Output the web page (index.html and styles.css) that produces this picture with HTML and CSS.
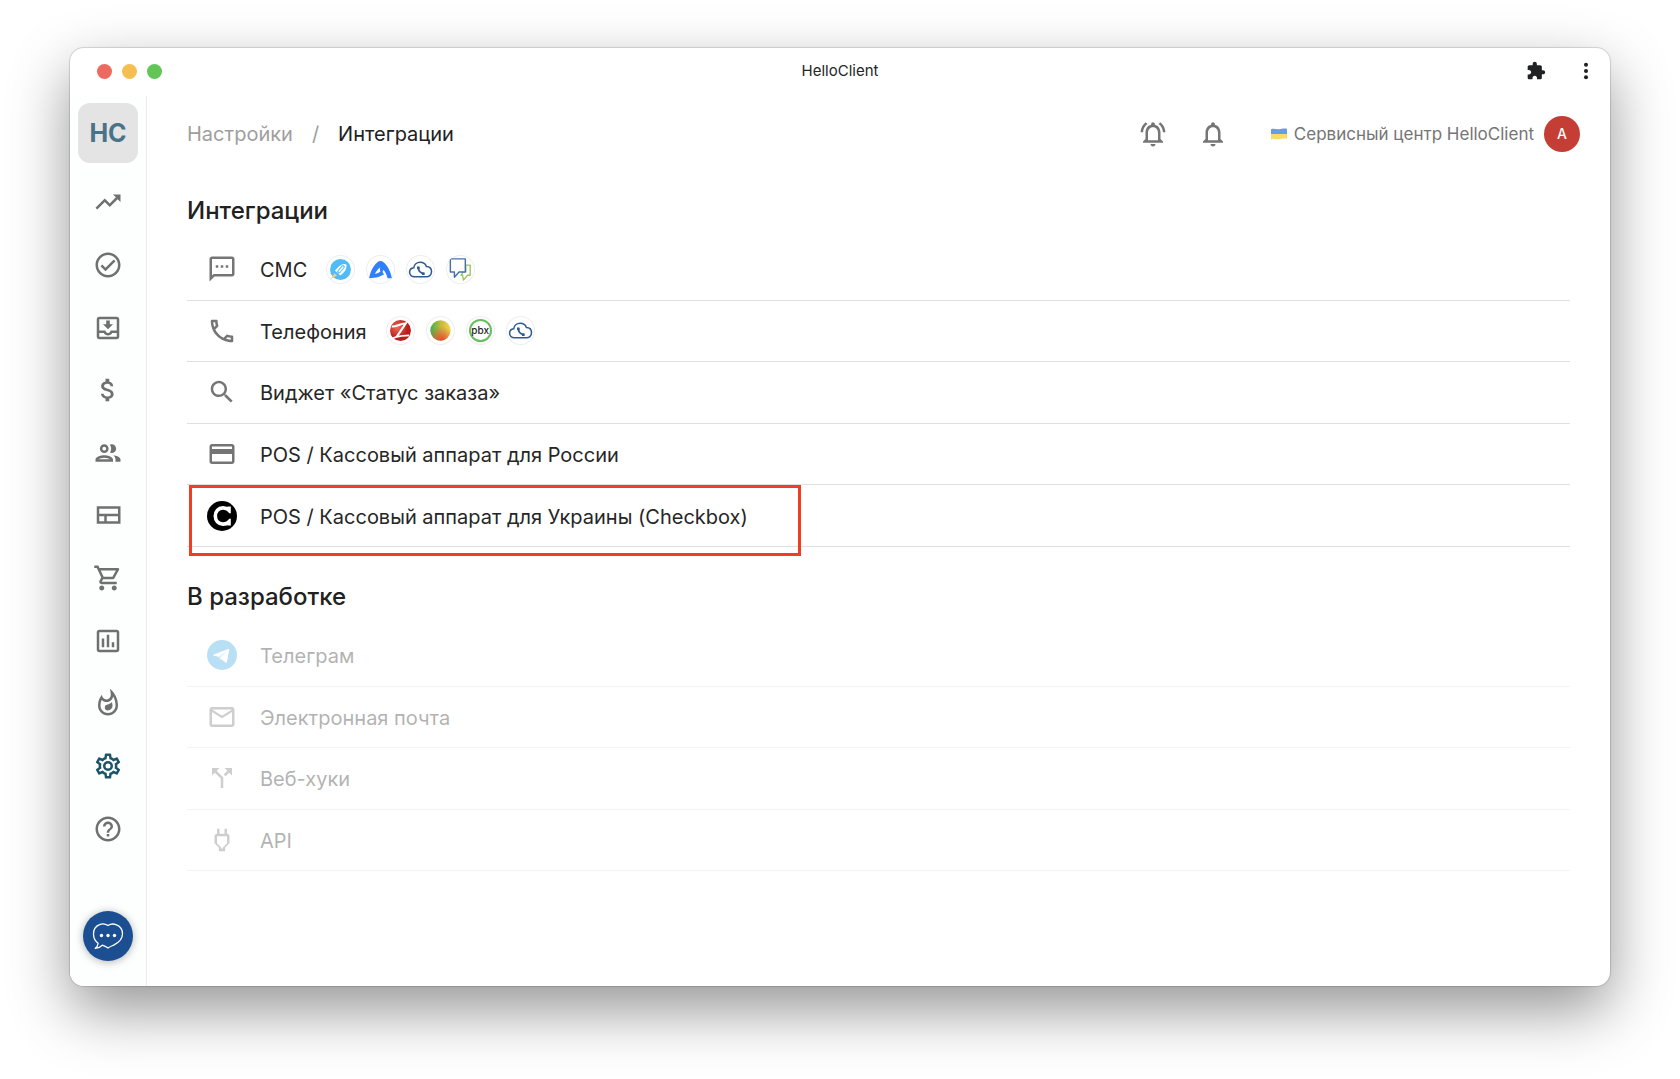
FILE: index.html
```html
<!DOCTYPE html>
<html lang="ru">
<head>
<meta charset="utf-8">
<meta name="viewport" content="width=device-width, initial-scale=1">
<title>HelloClient</title>
<link rel="stylesheet" href="styles.css">
</head>
<body>
<div class="window">
  <header class="titlebar">
    <div class="traffic">
      <button class="light light-close" type="button" aria-label="Закрыть"></button>
      <button class="light light-min" type="button" aria-label="Свернуть"></button>
      <button class="light light-max" type="button" aria-label="Развернуть"></button>
    </div>
    <div class="titlebar-name">HelloClient</div>
    <div class="titlebar-tools">
      <button class="icon-btn" type="button" aria-label="Расширения"><svg class="icon-sm" viewBox="0 0 24 24"><path d="M20.5 11H19V7c0-1.1-.9-2-2-2h-4V3.500C13 2.120 11.880 1 10.500 1S8 2.120 8 3.500V5H4c-1.100 0-1.990.9-1.990 2v3.800H3.500c1.490 0 2.700 1.210 2.700 2.700s-1.210 2.700-2.700 2.700H2V20c0 1.100.9 2 2 2h3.800v-1.500c0-1.490 1.210-2.700 2.700-2.700s2.700 1.210 2.700 2.700V22H17c1.100 0 2-.9 2-2v-4h1.500c1.380 0 2.500-1.120 2.500-2.500S21.880 11 20.500 11"/></svg></button>
      <button class="icon-btn" type="button" aria-label="Меню"><svg class="icon-sm" viewBox="0 0 20 20"><circle cx="10" cy="3.700" r="2"/><circle cx="10" cy="10" r="2"/><circle cx="10" cy="16.300" r="2"/></svg></button>
    </div>
  </header>

  <div class="body">
    <aside class="sidebar">
      <a class="logo" href="#">HC</a>
      <nav class="nav">
        <a href="#" aria-label="Показатели"><svg class="icon" viewBox="0 0 24 24"><path d="m16 6 2.290 2.290-4.880 4.880-4-4L2 16.590 3.410 18l6-6 4 4 6.300-6.290L22 12V6z"/></svg></a>
        <a href="#" aria-label="Задачи"><svg class="icon" viewBox="0 0 24 24"><path d="M12 2C6.500 2 2 6.500 2 12S6.500 22 12 22 22 17.500 22 12 17.500 2 12 2M12 20C7.590 20 4 16.410 4 12S7.590 4 12 4 20 7.590 20 12 16.410 20 12 20M16.590 7.580L10 14.170L7.410 11.590L6 13L10 17L18 9L16.590 7.580Z"/></svg></a>
        <a href="#" aria-label="Заказы"><svg class="icon" viewBox="0 0 24 24"><path d="M16 9h-2.550V6h-2.900v3H8l4 4zm3-6H4.990C3.880 3 3 3.900 3 5v14c0 1.100.88 2 1.990 2H19c1.100 0 2-.9 2-2V5c0-1.100-.9-2-2-2m0 16H5v-3h3.560c.69 1.190 1.970 2 3.450 2s2.750-.81 3.450-2H19zm0-5h-4.990c0 1.100-.9 2-2 2s-2-.9-2-2H5V5h14z"/></svg></a>
        <a href="#" aria-label="Финансы"><svg class="icon" viewBox="0 0 24 24"><path d="M11.800 10.900c-2.270-.59-3-1.200-3-2.150 0-1.090 1.010-1.850 2.700-1.850 1.780 0 2.440.85 2.500 2.100h2.210c-.07-1.720-1.120-3.300-3.210-3.810V3h-3v2.160c-1.940.42-3.500 1.680-3.500 3.610 0 2.310 1.910 3.460 4.700 4.130 2.500.6 3 1.480 3 2.410 0 .69-.49 1.790-2.700 1.790-2.060 0-2.870-.92-2.980-2.100h-2.200c.12 2.190 1.760 3.420 3.680 3.830V21h3v-2.150c1.950-.37 3.500-1.500 3.500-3.550 0-2.840-2.430-3.810-4.700-4.400"/></svg></a>
        <a href="#" aria-label="Клиенты"><svg class="icon" viewBox="0 0 24 24"><path d="M9 13.750c-2.340 0-7 1.170-7 3.500V19h14v-1.750c0-2.330-4.660-3.500-7-3.500M4.340 17c.84-.58 2.870-1.250 4.660-1.250s3.820.67 4.660 1.250zM9 12c1.930 0 3.500-1.570 3.500-3.500S10.930 5 9 5 5.500 6.570 5.500 8.500 7.070 12 9 12m0-5c.83 0 1.500.67 1.500 1.500S9.830 10 9 10s-1.500-.67-1.500-1.500S8.170 7 9 7m7.040 6.810c1.160.84 1.960 1.960 1.960 3.440V19h4v-1.750c0-2.020-3.500-3.170-5.960-3.440M15 12c1.930 0 3.500-1.570 3.500-3.500S16.930 5 15 5c-.54 0-1.040.13-1.500.35.63.89 1 1.980 1 3.150s-.37 2.260-1 3.150c.46.22.96.35 1.500.35"/></svg></a>
        <a href="#" aria-label="Склад"><svg class="icon" viewBox="0 0 24 24"><path d="M3 5v14h19V5zm2 2h15v4H5zm0 10v-4h4v4zm6 0v-4h9v4z"/></svg></a>
        <a href="#" aria-label="Магазин"><svg class="icon" viewBox="0 0 24 24"><path d="M15.550 13c.75 0 1.410-.41 1.750-1.030l3.580-6.490c.37-.66-.11-1.480-.87-1.480H5.210l-.94-2H1v2h2l3.600 7.590-1.350 2.440C4.520 15.370 5.480 17 7 17h12v-2H7l1.100-2zM6.160 6h12.150l-2.760 5H8.530zM7 18c-1.100 0-1.990.9-1.990 2S5.900 22 7 22s2-.9 2-2-.9-2-2-2m10 0c-1.100 0-1.990.9-1.990 2s.89 2 1.990 2 2-.9 2-2-.9-2-2-2"/></svg></a>
        <a href="#" aria-label="Отчёты"><svg class="icon" viewBox="0 0 24 24"><path d="M19 3H5c-1.100 0-2 .9-2 2v14c0 1.100.9 2 2 2h14c1.100 0 2-.9 2-2V5c0-1.100-.9-2-2-2m0 16H5V5h14zM7 10h2v7H7zm4-3h2v10h-2zm4 6h2v4h-2z"/></svg></a>
        <a href="#" aria-label="Лиды"><svg class="icon" viewBox="0 0 24 24"><path d="M11.570 13.160c-1.360.28-2.170 1.160-2.170 2.410 0 1.340 1.110 2.420 2.490 2.420 2.050 0 3.710-1.660 3.710-3.710 0-1.070-.15-2.120-.46-3.120-.79 1.070-2.200 1.720-3.570 2M13.500.67s.74 2.650.74 4.800c0 2.060-1.350 3.730-3.410 3.730-2.070 0-3.630-1.670-3.630-3.730l.03-.36C5.210 7.510 4 10.620 4 14c0 4.420 3.580 8 8 8s8-3.580 8-8C20 8.610 17.410 3.800 13.500.67M12 20c-3.310 0-6-2.690-6-6 0-1.530.3-3.040.86-4.430 1.010 1.010 2.410 1.630 3.970 1.630 2.660 0 4.750-1.830 5.280-4.430C17.340 8.970 18 11.440 18 14c0 3.310-2.690 6-6 6"/></svg></a>
        <a class="is-active" href="#" aria-label="Настройки" aria-current="page"><svg class="icon" viewBox="0 0 24 24"><path d="M12,8A4,4 0 0,1 16,12A4,4 0 0,1 12,16A4,4 0 0,1 8,12A4,4 0 0,1 12,8M12,10A2,2 0 0,0 10,12A2,2 0 0,0 12,14A2,2 0 0,0 14,12A2,2 0 0,0 12,10M10,22C9.75,22 9.54,21.82 9.5,21.58L9.13,18.93C8.5,18.68 7.96,18.34 7.44,17.94L4.95,18.95C4.73,19.03 4.46,18.95 4.34,18.73L2.34,15.27C2.21,15.05 2.27,14.78 2.46,14.63L4.57,12.97L4.5,12L4.57,11L2.46,9.37C2.27,9.22 2.21,8.95 2.34,8.73L4.34,5.27C4.46,5.05 4.73,4.96 4.95,5.05L7.44,6.05C7.96,5.66 8.5,5.32 9.13,5.07L9.5,2.42C9.54,2.18 9.75,2 10,2H14C14.25,2 14.46,2.18 14.5,2.42L14.87,5.07C15.5,5.32 16.04,5.66 16.56,6.05L19.05,5.05C19.27,4.96 19.54,5.05 19.66,5.27L21.66,8.73C21.79,8.95 21.73,9.22 21.54,9.37L19.43,11L19.5,12L19.43,13L21.54,14.63C21.73,14.78 21.79,15.05 21.66,15.27L19.66,18.73C19.54,18.95 19.27,19.04 19.05,18.95L16.56,17.95C16.04,18.34 15.5,18.68 14.87,18.93L14.5,21.58C14.46,21.82 14.25,22 14,22H10M11.25,4L10.88,6.61C9.68,6.86 8.62,7.5 7.85,8.39L5.44,7.35L4.69,8.65L6.8,10.2C6.4,11.37 6.4,12.64 6.8,13.8L4.68,15.36L5.43,16.66L7.86,15.62C8.63,16.5 9.68,17.14 10.87,17.38L11.24,20H12.76L13.13,17.39C14.32,17.14 15.37,16.5 16.14,15.62L18.57,16.66L19.32,15.36L17.2,13.81C17.6,12.64 17.6,11.37 17.2,10.2L19.31,8.65L18.56,7.35L16.15,8.39C15.38,7.5 14.32,6.86 13.12,6.62L12.75,4H11.25Z"/></svg></a>
        <a href="#" aria-label="Помощь"><svg class="icon" viewBox="0 0 24 24"><path d="M11 18h2v-2h-2zm1-16C6.480 2 2 6.480 2 12s4.480 10 10 10 10-4.480 10-10S17.520 2 12 2m0 18c-4.410 0-8-3.590-8-8s3.590-8 8-8 8 3.590 8 8-3.590 8-8 8m0-14c-2.210 0-4 1.790-4 4h2c0-1.100.9-2 2-2s2 .9 2 2c0 2-3 1.750-3 5h2c0-2.250 3-2.500 3-5 0-2.210-1.790-4-4-4"/></svg></a>
      </nav>
      <button class="chat" type="button" aria-label="Чат поддержки">
        <svg class="chat-icon" viewBox="0 0 50 50"><path d="M25 14.500c-2.500-1.800-6-2-8.500-.9-4 1.600-6 5-6 9.400 0 4 1.600 7 4.600 9.200-.2 2-1 3.900-2.800 5.200 3 .1 4.900-1.200 7-3.200 2 .8 4 1.600 5.700 2.800 1.700-1.200 3.700-2 5.700-2.900 5-2.400 8.800-6.200 8.800-11.300 0-4.200-2.200-7.500-6-9-2.500-1-6-1-8.500.7z" fill="none" stroke="#fff" stroke-width="1.300" stroke-linejoin="round"/><circle cx="18.500" cy="24.500" r="1.700" fill="#fff"/><circle cx="25" cy="24.500" r="1.700" fill="#fff"/><circle cx="31.500" cy="24.500" r="1.700" fill="#fff"/></svg>
      </button>
    </aside>

    <main class="main">
      <div class="topbar">
        <nav class="crumbs" aria-label="Навигация">
          <a href="#">Настройки</a>
          <span class="crumb-sep">/</span>
          <span class="crumb-now">Интеграции</span>
        </nav>
        <div class="topbar-tools">
          <button class="icon-btn" type="button" aria-label="Напоминания"><svg class="icon" viewBox="0 0 24 24"><path d="M12 22c1.100 0 2-.9 2-2h-4c0 1.100.9 2 2 2m6-6v-5c0-3.070-1.630-5.640-4.500-6.320V4c0-.83-.67-1.500-1.500-1.500s-1.500.67-1.500 1.500v.68C7.640 5.360 6 7.920 6 11v5l-2 2v1h16v-1zm-2 1H8v-6c0-2.480 1.510-4.500 4-4.500s4 2.020 4 4.500zM7.580 4.080 6.150 2.650C3.750 4.480 2.170 7.300 2.030 10.500h2c.15-2.650 1.510-4.970 3.550-6.420m12.390 6.420h2c-.15-3.200-1.730-6.020-4.120-7.850l-1.420 1.430c2.020 1.450 3.390 3.770 3.540 6.420"/></svg></button>
          <button class="icon-btn" type="button" aria-label="Уведомления"><svg class="icon" viewBox="0 0 24 24"><path d="M12 22c1.100 0 2-.9 2-2h-4c0 1.100.9 2 2 2m6-6v-5c0-3.070-1.630-5.640-4.500-6.320V4c0-.83-.67-1.500-1.500-1.500s-1.500.67-1.500 1.500v.68C7.640 5.360 6 7.920 6 11v5l-2 2v1h16v-1zm-2 1H8v-6c0-2.480 1.510-4.500 4-4.500s4 2.020 4 4.500z"/></svg></button>
          <button class="account" type="button">
            <svg class="flag" viewBox="0 0 16 12"><path d="M0 1.200C3 .2 5 1.600 8 1.200S13 .2 16 .8V6H0z" fill="#6b9be0"/><path d="M0 6h16v4.900c-3-.8-5 .2-8 .4s-5-.8-8 .2z" fill="#f7dc6a"/></svg>
            <span class="account-name">Сервисный центр HelloClient</span>
            <span class="avatar">A</span>
          </button>
        </div>
      </div>

      <section class="section">
        <h2>Интеграции</h2>
        <ul class="list list-five">
          <li><a class="row" href="#">
            <span class="row-icon"><svg class="icon" viewBox="0 0 24 24"><path d="M20 2H4c-1.100 0-2 .9-2 2v18l4-4h14c1.100 0 2-.9 2-2V4c0-1.100-.9-2-2-2m0 14H5.170L4 17.170V4h16zM7 9h2v2H7zm4 0h2v2h-2zm4 0h2v2h-2z"/></svg></span>
            <span class="row-label">СМС</span>
            <span class="chips">
              <svg class="chip" viewBox="0 0 30 30"><circle cx="15" cy="15" r="10.800" fill="#4fbcf8"/><path d="m8.800 18.800 2.600 2.400-6.900 4z" fill="#f9c98a"/><path d="M19.500 9.200c1.300.1 1.700.5 1.700 1.900-.1 3.400-1.100 5.200-3.100 7.200l-3.200 3-5.600-5.300 3.200-3.400c2-2.100 3.900-3.300 7-3.400z" fill="#fff"/><path d="m13.400 17.300 4.200-5" fill="none" stroke="#4fbcf8" stroke-width="3.600" stroke-linecap="round"/><path d="m13.700 17 3.700-4.400" fill="none" stroke="#fff" stroke-width="1.700" stroke-linecap="round"/></svg>
              <svg class="chip" viewBox="0 0 30 30"><path d="M3.300 24c1-7 4.800-13.500 8.500-16.500 2.100-1.600 4.300-1.600 6.400 0C21.900 10.500 25.700 17 26.700 24h-4.400c-.8-3.500-2-6.300-4.100-8.600-.6.400-1 1-1 1.800.1 1.200.9 2 2 2.300-3.200 2.700-8.800 4.500-15.900 4.500zM14.800 12.600c-2.600 2-4.600 4.300-5.500 7 2.300-.5 4.300-1.400 5.700-2.800-.8-1-.9-2.300-.2-4.200z" fill="#2f80fa" fill-rule="evenodd"/></svg>
              <svg class="chip" viewBox="0 0 30 30"><use href="#cloud"/></svg>
              <svg class="chip" viewBox="0 0 30 30"><path d="M20.500 10.500h4.500v10.500h-2.700l-4.300 5-.8-5h-1.700l2.500-3.500h2.500z" fill="#fff" stroke="#9ac45c" stroke-width="1.400" stroke-linejoin="round"/><path d="M4.500 4h15.500v13.500h-6.500L8.700 23v-5.500H4.500z" fill="#fff" stroke="#4671a8" stroke-width="1.500" stroke-linejoin="round"/></svg>
            </span>
          </a></li>
          <li><a class="row" href="#">
            <span class="row-icon"><svg class="icon" viewBox="0 0 24 24"><path d="M6.540 5c.06.89.21 1.760.45 2.590l-1.200 1.200c-.41-1.200-.67-2.470-.76-3.790zm9.860 12.020c.85.24 1.720.39 2.600.45v1.490c-1.320-.09-2.590-.35-3.800-.75zM7.500 3H4c-.55 0-1 .45-1 1 0 9.390 7.610 17 17 17 .55 0 1-.45 1-1v-3.490c0-.55-.45-1-1-1-1.240 0-2.450-.2-3.570-.57-.1-.04-.21-.05-.31-.05-.26 0-.51.1-.71.29l-2.200 2.200c-2.830-1.450-5.150-3.760-6.590-6.590l2.200-2.200c.28-.28.36-.67.25-1.020C8.700 6.450 8.500 5.250 8.500 4c0-.55-.45-1-1-1"/></svg></span>
            <span class="row-label">Телефония</span>
            <span class="chips">
              <svg class="chip" viewBox="0 0 30 30"><defs><radialGradient id="ruby" cx=".35" cy=".35"><stop offset="0" stop-color="#ef6a5a"/><stop offset="1" stop-color="#b81f1c"/></radialGradient></defs><circle cx="15" cy="15" r="10.800" fill="url(#ruby)"/><path d="M6 10.800c4 .7 8-2.600 14.500-3.300l-9.500 14" fill="none" stroke="#fff" stroke-width="2.200"/><path d="M6.500 23.500c5-3.500 11-3 17.500-3.500" fill="none" stroke="#fff" stroke-width="1.800"/></svg>
              <svg class="chip" viewBox="0 0 30 30"><defs><linearGradient id="leaf" x2="1"><stop offset="0" stop-color="#3dae4d"/><stop offset=".5" stop-color="#c3b93d"/><stop offset="1" stop-color="#f3d84f"/></linearGradient><radialGradient id="glow" cx=".55" cy="1" r=".7"><stop offset="0" stop-color="#e8452f"/><stop offset="1" stop-color="#e8452f" stop-opacity="0"/></radialGradient></defs><circle cx="15" cy="15" r="10.500" fill="url(#leaf)"/><circle cx="15" cy="15" r="10.500" fill="url(#glow)"/></svg>
              <span class="chip chip-pbx"><span>pbx</span></span>
              <svg class="chip" viewBox="0 0 30 30"><defs><g id="cloud" fill="none" stroke="#2d5b93" stroke-width="1.600"><path d="M9 22.500c-3 0-5.300-1.700-5.300-4.600 0-2.500 1.800-4.300 4.300-4.600.4-3.400 3.200-5.800 6.700-5.800 3 0 5.400 1.600 6.400 4.300 3.200.1 5.300 2.300 5.300 5.300 0 3.300-2.300 5.400-5.400 5.400z"/><path d="M13 12.300c-.7 3.700 1.700 6.700 6 7" stroke-width="1.800"/><path d="M12.700 12v2.500M16.500 19.300h2.700" stroke-width="2.600"/></g></defs><use href="#cloud"/></svg>
            </span>
          </a></li>
          <li><a class="row" href="#">
            <span class="row-icon"><svg class="icon" viewBox="0 0 24 24"><path d="M15.500 14h-.79l-.28-.27C15.410 12.590 16 11.110 16 9.500 16 5.910 13.090 3 9.500 3S3 5.910 3 9.500 5.910 16 9.500 16c1.610 0 3.090-.59 4.230-1.570l.27.28v.79l5 4.990L20.490 19zm-6 0C7.010 14 5 11.990 5 9.500S7.010 5 9.500 5 14 7.010 14 9.500 11.990 14 9.500 14"/></svg></span>
            <span class="row-label">Виджет «Статус заказа»</span>
          </a></li>
          <li><a class="row" href="#">
            <span class="row-icon"><svg class="icon" viewBox="0 0 24 24"><path d="M20 4H4c-1.110 0-1.990.89-1.990 2L2 18c0 1.110.89 2 2 2h16c1.110 0 2-.89 2-2V6c0-1.110-.89-2-2-2m0 14H4v-6h16zm0-10H4V6h16z"/></svg></span>
            <span class="row-label">POS / Кассовый аппарат для России</span>
          </a></li>
          <li class="is-marked"><a class="row" href="#">
            <span class="row-icon"><svg class="icon" viewBox="0 0 30 30"><circle cx="15" cy="15" r="15" fill="#000"/><path d="M22 9c-3.500-2.900-8.800-2.800-11.600.2-2.800 3.100-2.800 8.500 0 11.600 2.800 3 8.100 3.100 11.600.2" fill="none" stroke="#fff" stroke-width="3.600"/><path d="M20.800 5.500h3v6.700h-1.600l-4-5zM20.800 24.500h3v-6.700h-1.600l-4 5z" fill="#fff"/></svg></span>
            <span class="row-label">POS / Кассовый аппарат для Украины (Checkbox)</span>
          </a></li>
        </ul>
      </section>

      <section class="section">
        <h2>В разработке</h2>
        <ul class="list list-four is-disabled">
          <li><div class="row">
            <span class="row-icon"><svg class="icon" viewBox="0 0 30 30"><circle cx="15" cy="15" r="15" fill="#38a5e0"/><path d="M6.200 14.800 21 9c.8-.3 1.400.2 1.200 1.100L20 21.800c-.2.900-.8 1.100-1.500.6l-4.700-3.400-2.500-2.300-5.100-1.100c-.7-.2-.7-.6 0-.8z" fill="#fff"/><path d="m11.300 16.700 8-4.900-5.800 5.900-.5 3z" fill="#9fd3ef"/></svg></span>
            <span class="row-label">Телеграм</span>
          </div></li>
          <li><div class="row">
            <span class="row-icon"><svg class="icon" viewBox="0 0 24 24"><path d="M22 6c0-1.100-.9-2-2-2H4c-1.100 0-2 .9-2 2v12c0 1.100.9 2 2 2h16c1.100 0 2-.9 2-2zm-2 0-8 5-8-5zm0 12H4V8l8 5 8-5z"/></svg></span>
            <span class="row-label">Электронная почта</span>
          </div></li>
          <li><div class="row">
            <span class="row-icon"><svg class="icon" viewBox="0 0 24 24"><path d="m14 4 2.290 2.290-2.880 2.880 1.420 1.420 2.880-2.880L20 10V4zm-4 0H4v6l2.290-2.290 4.710 4.700V20h2v-8.410l-5.290-5.300z"/></svg></span>
            <span class="row-label">Веб-хуки</span>
          </div></li>
          <li><div class="row">
            <span class="row-icon"><svg class="icon" viewBox="0 0 24 24"><path d="M16 9v5.660l-3.500 3.510V19h-1v-.83L8 14.650V9h8m0-6h-2v4h-4V3H8v4h-.01C6.900 6.990 6 7.890 6 8.980v5.520L9.500 18v3h5v-3l3.500-3.510V9c0-1.100-.9-2-2-2z"/></svg></span>
            <span class="row-label">API</span>
          </div></li>
        </ul>
      </section>
    </main>
  </div>
</div>
</body>
</html>
```

FILE: styles.css
```css
*, *::after { box-sizing: border-box; }

body {
  display: flex;
  min-height: 100vh;
  margin: 0;
  padding: 48px 70px 93px;
  background: #fff;
  color: #262626;
  font: 20px/28px Inter, "Liberation Sans", sans-serif;
}

a { color: inherit; text-decoration: none; }

button {
  padding: 0;
  border: 0;
  background: none;
  color: inherit;
  font: inherit;
}

svg { display: block; fill: currentColor; }

.window {
  display: flex;
  flex: 1;
  flex-direction: column;
  min-width: 0;
  overflow: hidden;
  border-radius: 14px;
  background: #fff;
  box-shadow: 0 0 1px 1px rgba(0, 0, 0, .14), 0 24px 60px rgba(0, 0, 0, .42);
}

/* Title bar */
.titlebar {
  display: grid;
  grid-template-columns: 1fr auto 1fr;
  align-items: center;
  height: 48px;
  padding: 0 14px 2px;
}

.traffic { display: flex; gap: 10px; padding-left: 13px; }
.light { width: 15px; height: 15px; border-radius: 50%; }
.light-close { background: #ed6a5f; }
.light-min { background: #f5bf4f; }
.light-max { background: #62c555; }
.titlebar-name { font-size: 15px; line-height: 20px; }
.titlebar-tools { display: flex; gap: 30px; justify-content: flex-end; color: #202124; }

.icon { width: 30px; height: 30px; flex: none; }
.icon-sm { width: 20px; height: 20px; }
.icon-btn { display: flex; }

.body { display: flex; flex: 1; }

/* Sidebar */
.sidebar {
  display: flex;
  flex: none;
  flex-direction: column;
  align-items: center;
  width: 77px;
  padding: 7px 0 25px;
  border-right: 1px solid #ececec;
  background: #fdfefe;
  color: #707070;
}

.logo {
  display: grid;
  place-items: center;
  width: 60px;
  height: 60px;
  border-radius: 12px;
  background: #e4e4e4;
  color: #4a7387;
  font-size: 25px;
  font-weight: 700;
}

.nav {
  display: grid;
  grid-auto-rows: 1fr;
  place-items: center;
  height: 689px;
  margin: 8px 0;
}

.nav .is-active { color: #1d5468; }

.chat {
  width: 50px;
  height: 50px;
  margin-top: auto;
  border-radius: 50%;
  background: #1b4f91;
  box-shadow: 0 1px 8px rgba(0, 0, 0, .3);
}

.chat-icon { width: 50px; height: 50px; }

/* Main area */
.main { flex: 1; min-width: 0; padding: 0 40px; }

.topbar {
  display: flex;
  align-items: center;
  justify-content: space-between;
  height: 75px;
  margin-right: -10px;
}

.crumbs { display: flex; gap: 19px; color: #9e9e9e; }
.crumb-now { color: #212121; }

.topbar-tools { display: flex; gap: 30px; align-items: center; color: #757575; }
.account { display: flex; gap: 7px; align-items: center; margin-left: 13px; font-size: 17px; }
.flag { width: 16px; height: 12px; }

.avatar {
  display: grid;
  place-items: center;
  width: 36px;
  height: 36px;
  margin-left: 3px;
  border-radius: 50%;
  background: #c43e36;
  color: #fff;
  font-size: 14px;
  font-weight: 500;
}

.section { padding-top: 24px; }
.section + .section { padding-top: 34px; }

h2 { margin: 0 0 12px; color: #212121; font-size: 24px; font-weight: 500; line-height: 32px; }

.list {
  display: grid;
  grid-auto-rows: 1fr;
  margin: 0;
  padding: 0;
  list-style: none;
}

.list-five { height: 308px; }
.list-four { height: 246px; }
.list li { position: relative; display: flex; border-bottom: 1px solid #e0e0e0; }

.row { display: flex; flex: 1; align-items: center; padding-left: 20px; }
.row-icon { margin-right: 23px; color: #757575; }
.row-label { padding-top: 2px; }

.chips { display: flex; gap: 11px; margin-left: 19px; }

.chip {
  width: 29px;
  height: 29px;
  border-radius: 50%;
  box-shadow: inset 0 0 0 1px #eee;
}

.chip-pbx { display: grid; place-items: center; }

.chip-pbx span {
  width: 23px;
  height: 23px;
  border: 2px solid #68bd5c;
  border-radius: 50%;
  font-size: 10px;
  font-weight: 500;
  line-height: 18px;
  text-align: center;
}

.is-disabled .row { opacity: .35; }
.is-disabled li { border-color: #f3f3f3; }

/* Frame drawn over the highlighted row */
.is-marked::after {
  position: absolute;
  top: 0;
  left: 2px;
  width: 612px;
  height: 71px;
  border: 3px solid #ef3e23;
  content: "";
}
```
